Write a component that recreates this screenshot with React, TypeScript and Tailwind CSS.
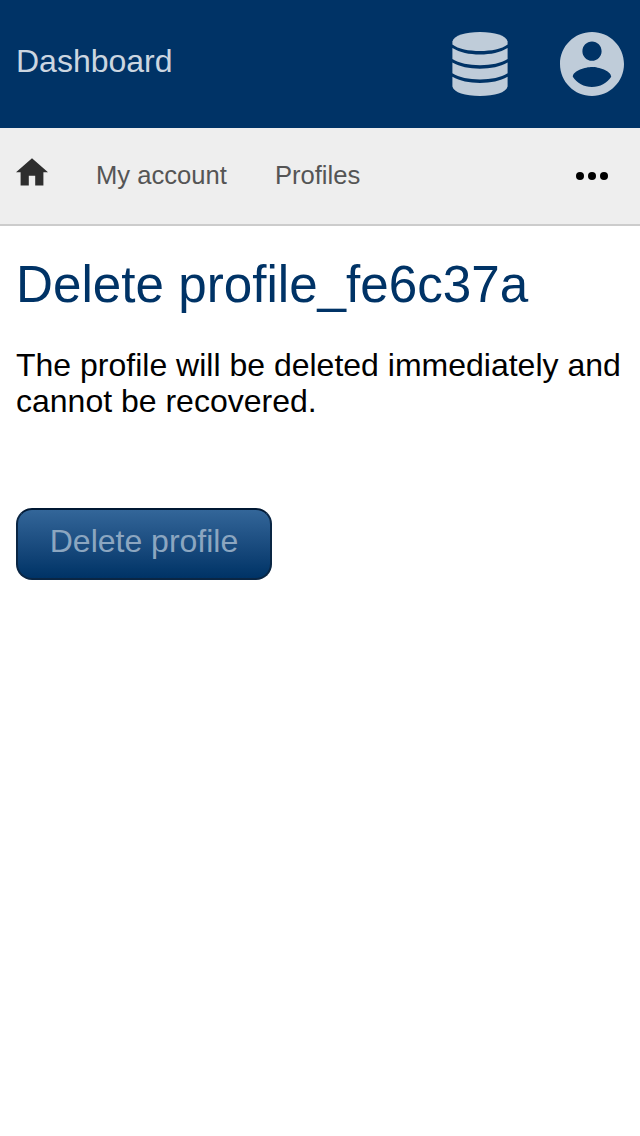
import React from "react";

function DatabaseIcon() {
  return (
    <svg className="h-16 w-14" viewBox="0 0 56 64" fill="#bfccd9" aria-hidden="true">
      <path d="M.4 9.500C2 3.500 13 0 28 0S54 3.500 55.600 9.500V12.500C50 17 39 19 28 19S6 17 .4 12.500Z" />
      <path d="M.4 16C8 20.500 17 22.500 28 22.500S48 20.500 55.600 16V27C49 31.200 39 33.200 28 33.200S7 31.200.4 27Z" />
      <path d="M.4 30.500C8 34.700 17 36.700 28 36.700S48 34.700 55.600 30.500V41.300C49 45.600 39 47.500 28 47.500S7 45.600.4 41.300Z" />
      <path d="M.4 44.800C8 49 17 51 28 51S48 49 55.600 44.800V54.500C54 60.500 43 64 28 64S2 60.500.4 54.500Z" />
    </svg>
  );
}

function AccountIcon() {
  return (
    <svg className="h-16 w-16" viewBox="2 2 20 20" fill="#bfccd9" aria-hidden="true">
      <path d="M12 2C6.480 2 2 6.480 2 12s4.480 10 10 10 10-4.480 10-10S17.520 2 12 2zm0 3c1.660 0 3 1.340 3 3s-1.340 3-3 3-3-1.340-3-3 1.340-3 3-3zm0 14.200c-2.500 0-4.710-1.280-6-3.220.030-1.990 4-3.080 6-3.080 1.990 0 5.970 1.090 6 3.080-1.290 1.940-3.500 3.220-6 3.220z" />
    </svg>
  );
}

export default function App() {
  return (
    <div className="min-h-[1136px] bg-white font-['Liberation_Sans',Arial,sans-serif] text-black">
      <header className="flex h-32 items-center justify-between bg-[#003366] px-4">
        <a className="pb-1.5 text-[32px] leading-9 text-[#ccd6e0]">Dashboard</a>
        <div className="flex items-center gap-[52px]">
          <DatabaseIcon />
          <AccountIcon />
        </div>
      </header>
      <nav className="flex h-[98px] items-center border-b-2 border-[#cccccc] bg-[#eeeeee] pr-8 pl-4 text-[25.6px] text-[#555555]">
        <svg className="mb-2 h-7 w-8" viewBox="0 0 32 28" fill="#2e2e2e" aria-label="Home">
          <path d="M12.800 27.400V17.800h6.400v9.600h8.200V14.200H32L16 .2 0 14.200h4.600v13.200z" />
        </svg>
        <a className="ml-12 pb-0.5">My account</a>
        <a className="ml-12 pb-0.5">Profiles</a>
        <svg className="ml-auto h-8 w-8" viewBox="0 0 32 32" fill="#000000" aria-label="More">
          <circle cx="4" cy="16" r="4" />
          <circle cx="16" cy="16" r="4" />
          <circle cx="28" cy="16" r="4" />
        </svg>
      </nav>
      <main className="px-4 pt-[30px]">
        <h1 className="text-[51.2px] leading-[58px] text-[#003366]">Delete profile_fe6c37a</h1>
        <p className="mt-[33px] text-[32px] leading-9">
          The profile will be deleted immediately and cannot be recovered.
        </p>
        <button className="mt-[89px] h-[72px] w-64 rounded-2xl border-2 border-[#0a2644] border-t-[#001833] bg-linear-to-b from-[#336699] to-[#003366] pb-1.5 text-[32px] leading-9 text-[#8ca6c0]">
          Delete profile
        </button>
      </main>
    </div>
  );
}
